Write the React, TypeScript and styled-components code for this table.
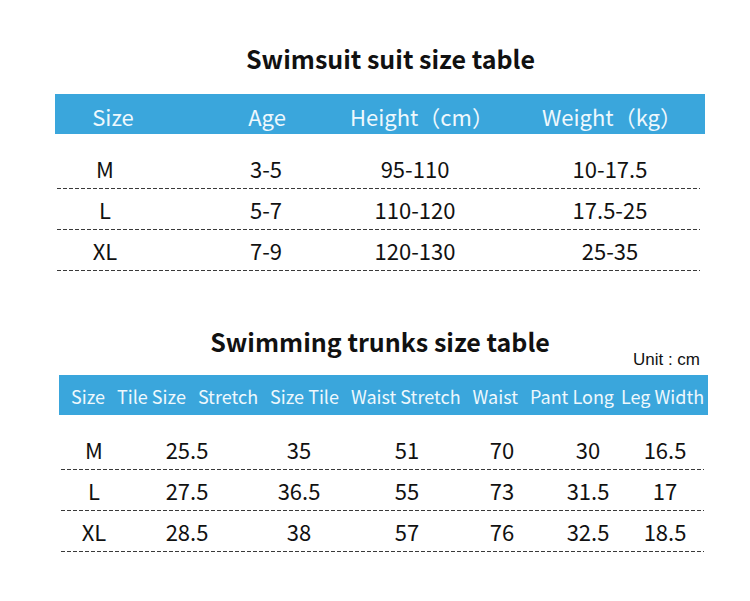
import React from 'react';
import styled, { createGlobalStyle } from 'styled-components';

const GlobalStyle = createGlobalStyle`
  body {
    margin: 0;
    background: #ffffff;
    font-family: "Noto Sans CJK SC", "Noto Sans", sans-serif;
  }
`;

const Page = styled.div`
  width: 750px;
  height: 601px;
  padding-top: 42px;
  box-sizing: border-box;
  display: flex;
  flex-direction: column;
  background: #ffffff;
  overflow: hidden;
`;

const Section = styled.section<{ $left: number; $width: number; $gap: number }>`
  display: flex;
  flex-direction: column;
  margin-left: ${(p) => p.$left}px;
  width: ${(p) => p.$width}px;
  margin-bottom: ${(p) => p.$gap}px;
`;

// $shift moves the centred title right (positive) or left (negative)
const Title = styled.h2<{ $shift: number; $below: number }>`
  margin: 0 0 ${(p) => p.$below}px;
  padding-left: ${(p) => Math.max(p.$shift, 0)}px;
  padding-right: ${(p) => Math.max(-p.$shift, 0)}px;
  text-align: center;
  font-size: 25px;
  line-height: 32px;
  font-weight: 700;
  color: #111111;
`;

const Unit = styled.div`
  align-self: flex-end;
  margin: -7px 8px 5px 0;
  font-family: "Liberation Sans", Arial, sans-serif;
  font-size: 17px;
  line-height: 20px;
  color: #111111;
`;

const HeaderBar = styled.div<{ $cols: string }>`
  display: grid;
  grid-template-columns: ${(p) => p.$cols};
  height: 40px;
  padding-top: 4px;
  box-sizing: border-box;
  align-items: center;
  background: #3aa6dc;
  color: #eef8fd;
  font-size: 22px;
`;

const FlowBar = styled.div`
  display: flex;
  align-items: center;
  gap: 12px;
  height: 40px;
  padding: 1px 0 0 12px;
  box-sizing: border-box;
  background: #3aa6dc;
  color: #eef8fd;
  font-size: 18px;
  white-space: nowrap;
  overflow: hidden;
`;

const Label = styled.span<{ $tight?: boolean }>`
  margin-left: ${(p) => (p.$tight ? '-5px' : '0')};
`;

const Cell = styled.div`
  display: flex;
  justify-content: center;
  white-space: nowrap;
`;

const Rows = styled.div<{ $inset: string; $top: number }>`
  display: flex;
  flex-direction: column;
  margin: ${(p) => p.$top}px ${(p) => p.$inset};
`;

const Row = styled.div<{ $cols: string }>`
  display: grid;
  grid-template-columns: ${(p) => p.$cols};
  height: 41px;
  padding-bottom: 1px;
  box-sizing: border-box;
  align-items: center;
  font-size: 22px;
  color: #111111;
  background-image: linear-gradient(to right, #3a3a3a 66%, transparent 0);
  background-size: 6px 1px;
  background-repeat: repeat-x;
  background-position: left bottom;
`;

const suitHead = ['Size', 'Age', 'Height（cm）', 'Weight（kg）'];
const suitRows = [
  ['M', '3-5', '95-110', '10-17.5'],
  ['L', '5-7', '110-120', '17.5-25'],
  ['XL', '7-9', '120-130', '25-35'],
];

const trunksHead = ['Size', 'Tile Size', 'Stretch', 'Size Tile', 'Waist Stretch', 'Waist', 'Pant Long', 'Leg Width'];
const trunksRows = [
  ['M', '25.5', '35', '51', '70', '30', '16.5'],
  ['L', '27.5', '36.5', '55', '73', '31.5', '17'],
  ['XL', '28.5', '38', '57', '76', '32.5', '18.5'],
];

const suitHeadCols = '116px 192px 118px 262px';
const suitBodyCols = '96px 226px 72px 318px';
const trunksBodyCols = '66px 120px 104px 112px 78px 94px 60px';

const App: React.FC = () => (
  <>
    <GlobalStyle />
    <Page>
      <Section $left={55} $width={650} $gap={54}>
        <Title $shift={21} $below={20}>Swimsuit suit size table</Title>
        <HeaderBar $cols={suitHeadCols}>
          {suitHead.map((h) => (
            <Cell key={h}>{h}</Cell>
          ))}
        </HeaderBar>
        <Rows $inset="5px 0 2px" $top={14}>
          {suitRows.map((r) => (
            <Row key={r[0]} $cols={suitBodyCols}>
              {r.map((v, i) => (
                <Cell key={i}>{v}</Cell>
              ))}
            </Row>
          ))}
        </Rows>
      </Section>

      <Section $left={59} $width={649} $gap={0}>
        <Title $shift={-7} $below={0}>Swimming trunks size table</Title>
        <Unit>Unit : cm</Unit>
        <FlowBar>
          {trunksHead.map((h) => (
            <Label key={h} $tight={h === 'Leg Width'}>
              {h}
            </Label>
          ))}
        </FlowBar>
        <Rows $inset="4px 0 2px" $top={14}>
          {trunksRows.map((r) => (
            <Row key={r[0]} $cols={trunksBodyCols}>
              {r.map((v, i) => (
                <Cell key={i}>{v}</Cell>
              ))}
            </Row>
          ))}
        </Rows>
      </Section>
    </Page>
  </>
);

export default App;
